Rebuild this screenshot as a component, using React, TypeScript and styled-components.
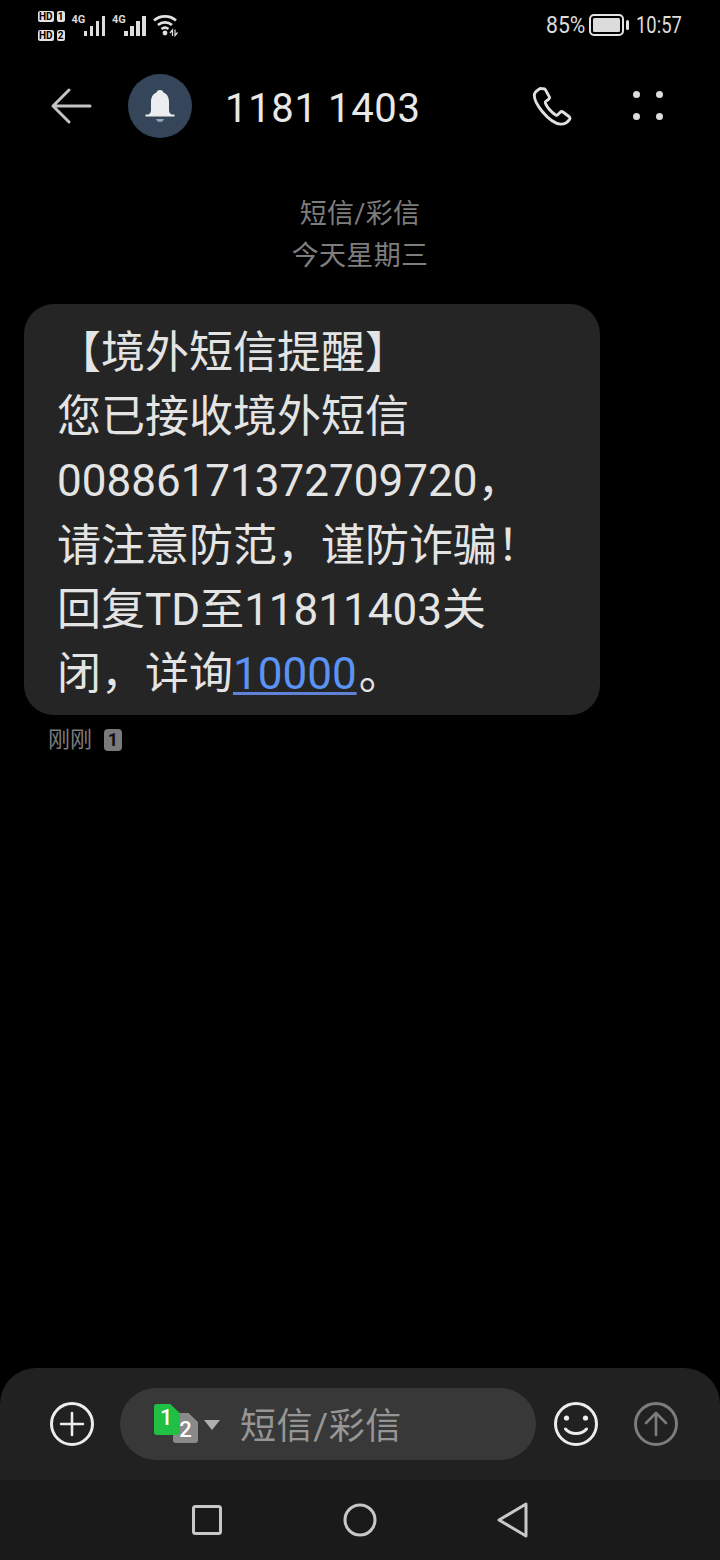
import React from 'react';
import styled, { createGlobalStyle } from 'styled-components';

const FONT = `Roboto, "Noto Sans CJK SC", sans-serif`;

const GlobalStyle = createGlobalStyle`
  html, body {
    margin: 0;
    padding: 0;
    background: #000;
  }
  body {
    font-family: ${FONT};
  }
`;

const Screen = styled.div`
  width: 720px;
  height: 1560px;
  display: flex;
  flex-direction: column;
  background: #000;
  color: #e6e6e6;
  overflow: hidden;
`;

// Status bar
const StatusBar = styled.div`
  height: 50px;
  flex: none;
  display: flex;
  align-items: center;
  justify-content: space-between;
  padding: 0 38px 0 38px;
`;

const StatusLeft = styled.div`
  display: flex;
  align-items: flex-start;
  gap: 7px;
`;

const StatusRight = styled.div`
  display: flex;
  align-items: center;
  font-size: 23px;
  color: #dcdcdc;
`;

const StatusText = styled.span<{ w: number; squeeze: number }>`
  display: block;
  width: ${({ w }) => w}px;
  white-space: nowrap;
  transform: scaleX(${({ squeeze }) => squeeze});
  transform-origin: left center;
`;

const SimStack = styled.div`
  display: flex;
  flex-direction: column;
  gap: 8px;
  padding-top: 1px;
`;

const SimRow = styled.div`
  display: flex;
  gap: 3px;
`;

const SimTag = styled.span`
  display: block;
  height: 11px;
  line-height: 11px;
  padding: 0 1px;
  min-width: 6px;
  text-align: center;
  background: #e2e2e2;
  border-radius: 2px;
  color: #000;
  font-size: 10px;
  font-weight: 700;
`;

const Signal = styled.div`
  display: flex;
  align-items: flex-end;
  height: 22px;
  margin-top: 4px;
`;

const NetLabel = styled.span`
  align-self: flex-start;
  width: 12px;
  margin-top: -1px;
  font-size: 11px;
  line-height: 13px;
  font-weight: 700;
  white-space: nowrap;
  color: #d8d8d8;
`;

const Bars = styled.div`
  display: flex;
  align-items: flex-end;
  gap: 2.5px;
`;

const Bar = styled.span<{ h: number }>`
  display: block;
  width: 3.5px;
  height: ${({ h }) => h}px;
  background: #dedede;
`;

const Battery = styled.div`
  display: flex;
  margin: 0 7px 0 5px;
`;

const WifiIcon = styled.svg`
  margin-top: 4px;
`;

// Header
const Header = styled.div`
  height: 112px;
  flex: none;
  display: flex;
  align-items: center;
  padding: 0 57px 0 50px;
`;

const BackButton = styled.div`
  width: 78px;
  display: flex;
  align-items: center;
`;

const Avatar = styled.div`
  width: 64px;
  height: 64px;
  flex: none;
  border-radius: 50%;
  background: #36465a;
  display: flex;
  align-items: center;
  justify-content: center;
`;

const Title = styled.div`
  flex: 1;
  margin-left: 33px;
  padding-top: 4px;
  font-size: 40px;
  font-weight: 400;
  color: #e8e8e8;
  letter-spacing: 0.65px;
`;

const HeaderActions = styled.div`
  display: flex;
  align-items: center;
  gap: 61px;
`;

const DotsIcon = styled.div`
  width: 30px;
  height: 29px;
  margin-top: -2px;
  display: grid;
  grid-template-columns: 7px 7px;
  justify-content: space-between;
  align-content: space-between;
`;

const Dot = styled.span`
  width: 7px;
  height: 7px;
  border-radius: 50%;
  background: #dcdcdc;
`;

// Conversation
const Thread = styled.div`
  flex: 1;
  padding: 32px 0 0 24px;
`;

const Meta = styled.div`
  margin-left: -24px;
  text-align: center;
  font-size: 27px;
  line-height: 41.5px;
  letter-spacing: 0.3px;
  color: #7e7e7e;
`;

const Bubble = styled.div`
  width: 576px;
  box-sizing: border-box;
  margin-top: 27px;
  padding: 17px 20px 9px 33px;
  background: #252525;
  border-radius: 30px;
  font-size: 44px;
  line-height: 64.2px;
  color: #e4e4e4;
`;

const Line = styled.div`
  white-space: nowrap;
`;

const PhoneLink = styled.span`
  margin-right: 2px;
  color: #5b93f5;
  text-decoration: underline;
  text-decoration-color: #5f82d8;
  text-decoration-thickness: 3px;
  text-underline-offset: 3px;
`;

const Receipt = styled.div`
  display: flex;
  align-items: center;
  gap: 12px;
  margin: 9px 0 0 24px;
  font-size: 22px;
  line-height: 32px;
  color: #7c7c7c;
`;

const ReceiptBadge = styled.span`
  width: 18px;
  height: 22px;
  border-radius: 4px;
  background: #7a7a7a;
  color: #111;
  font-size: 18px;
  font-weight: 700;
  line-height: 22px;
  text-align: center;
`;

// Composer
const Composer = styled.div`
  height: 112px;
  flex: none;
  box-sizing: border-box;
  padding: 20px 42px 20px 50px;
  display: flex;
  align-items: flex-start;
  background: #212121;
  border-radius: 36px 36px 0 0;
`;

const RoundIcon = styled.div<{ offset?: number }>`
  width: 44px;
  height: 44px;
  flex: none;
  margin-top: 14px;
  margin-left: ${({ offset = 0 }) => offset}px;
`;

const InputPill = styled.div`
  width: 416px;
  height: 72px;
  flex: none;
  margin-left: 26px;
  display: flex;
  align-items: center;
  background: #383838;
  border-radius: 36px;
`;

const SimPicker = styled.div`
  position: relative;
  width: 120px;
  height: 72px;
  flex: none;
`;

const SimCard = styled.span<{ active?: boolean }>`
  position: absolute;
  left: ${({ active }) => (active ? 34 : 53)}px;
  top: ${({ active }) => (active ? 16 : 25)}px;
  width: ${({ active }) => (active ? 26 : 25)}px;
  height: ${({ active }) => (active ? 31 : 30)}px;
  background: ${({ active }) => (active ? '#1fc043' : '#8a8a8a')};
  clip-path: polygon(0 0, 62% 0, 100% 30%, 100% 100%, 0 100%);
  border-radius: 3px;
  color: #fff;
  font-size: 22px;
  font-weight: 500;
  line-height: ${({ active }) => (active ? 28 : 34)}px;
  text-align: ${({ active }) => (active ? 'left' : 'center')};
  padding-left: ${({ active }) => (active ? 6 : 0)}px;
  box-sizing: border-box;
  z-index: ${({ active }) => (active ? 2 : 1)};
`;

const Caret = styled.span`
  position: absolute;
  left: 84px;
  top: 32px;
  width: 0;
  height: 0;
  border-left: 8px solid transparent;
  border-right: 8px solid transparent;
  border-top: 10px solid #b0b0b0;
`;

const Placeholder = styled.span`
  margin-top: -2px;
  font-size: 36px;
  letter-spacing: 0.6px;
  color: #969696;
`;

// Navigation bar
const NavBar = styled.div`
  height: 80px;
  flex: none;
  display: flex;
  align-items: center;
  justify-content: center;
  gap: 119px;
  background: #1a1a1a;
`;

const NavIcon = styled.svg<{ wide?: boolean }>`
  width: ${({ wide }) => (wide ? 36 : 32)}px;
  height: 36px;
  fill: none;
  stroke: #c8c8c8;
  stroke-width: 3;
  stroke-linejoin: round;
`;

const SignalBars = () => (
  <Bars>
    <Bar h={5} />
    <Bar h={10} />
    <Bar h={15} />
    <Bar h={20} />
  </Bars>
);

export default function App() {
  return (
    <Screen>
      <GlobalStyle />
      <StatusBar>
        <StatusLeft>
          <SimStack>
            <SimRow>
              <SimTag>HD</SimTag>
              <SimTag>1</SimTag>
            </SimRow>
            <SimRow>
              <SimTag>HD</SimTag>
              <SimTag>2</SimTag>
            </SimRow>
          </SimStack>
          <Signal>
            <NetLabel>4G</NetLabel>
            <SignalBars />
          </Signal>
          <Signal>
            <NetLabel>4G</NetLabel>
            <SignalBars />
          </Signal>
          <WifiIcon width="26" height="24" viewBox="0 0 26 24" fill="none" stroke="#e2e2e2" strokeWidth="2.6">
            <path d="M1 6.500C7 1 17 1 23 6.500" />
            <path d="M5 11C9 7.500 15 7.500 19 11" />
            <path d="M8.500 15C10.500 13.500 13.500 13.500 15.500 15" />
            <circle cx="12" cy="19" r="2.400" fill="#e2e2e2" stroke="none" />
            <path d="M19.500 22v-6l-2.500 3M22 15.500v6l2.500-3" strokeWidth="1.200" />
          </WifiIcon>
        </StatusLeft>
        <StatusRight>
          <StatusText w={38} squeeze={0.92}>85%</StatusText>
          <Battery>
            <svg width="40" height="22" viewBox="0 0 40 22">
              <rect x="1" y="1" width="33" height="20" rx="4" fill="none" stroke="#e4e4e4" strokeWidth="2" />
              <rect x="4" y="4" width="27" height="14" rx="1.500" fill="#dcdcdc" />
              <rect x="37" y="6" width="3" height="10" rx="1.500" fill="#e4e4e4" />
            </svg>
          </Battery>
          <StatusText w={46} squeeze={0.8}>10:57</StatusText>
        </StatusRight>
      </StatusBar>

      <Header>
        <BackButton>
          <svg width="42" height="38" viewBox="0 0 42 38" fill="none" stroke="#c4c4c4" strokeWidth="3" strokeLinecap="round" strokeLinejoin="round">
            <path d="M40 19H3M19 3L3 19l16 16" />
          </svg>
        </BackButton>
        <Avatar>
          <svg width="32" height="34" viewBox="0 0 32 34">
            <path d="M16 1c2 0 3 1 3.500 2.500C23.500 5 25 9 25 13v8c0 2 1 3.500 2.500 4.500H30.500V27.500H1.500V25.500H4.500C6 24.500 7 23 7 21v-8c0-4 1.500-8 5.500-9.500C13 2 14 1 16 1z" fill="#ecedf0" />
            <path d="M12 30h8c-.5 2-2 3-4 3s-3.500-1-4-3z" fill="#9ba3ad" />
          </svg>
        </Avatar>
        <Title>1181 1403</Title>
        <HeaderActions>
          <svg width="40" height="40" viewBox="0 0 42 42" fill="none" stroke="#e0e0e0" strokeWidth="3" strokeLinejoin="round">
            <path d="M9 2.500c-3 1.500-6 3.500-6.500 6.500C2 14 6 21 11 27c5 6 12 12.500 19 13 3 .2 7-1.500 9.500-5 .6-1 .4-2-.4-2.700l-6.600-5c-1-.7-2-.6-2.800.2l-2.700 2.700c-.6.6-1.400.6-2.100.2-2.500-1.500-4.700-3.500-6.600-5.700-1.800-2-3.200-4.200-4.200-6.500-.3-.8-.1-1.500.5-2l3-2.300c.8-.7 1-1.700.5-2.700l-4-7.300c-.6-1-1.600-1.300-2.600-.9z" />
          </svg>
          <DotsIcon>
            <Dot />
            <Dot />
            <Dot />
            <Dot />
          </DotsIcon>
        </HeaderActions>
      </Header>

      <Thread>
        <Meta>
          短信/彩信
          <br />
          今天星期三
        </Meta>
        <Bubble>
          <Line>【境外短信提醒】</Line>
          <Line>您已接收境外短信</Line>
          <Line>00886171372709720，</Line>
          <Line>请注意防范，谨防诈骗！</Line>
          <Line>回复TD至11811403关</Line>
          <Line>
            闭，详询<PhoneLink>10000</PhoneLink>。
          </Line>
        </Bubble>
        <Receipt>
          刚刚
          <ReceiptBadge>1</ReceiptBadge>
        </Receipt>
      </Thread>

      <Composer>
        <RoundIcon>
          <svg width="44" height="44" viewBox="0 0 44 44" fill="none" stroke="#ececec" strokeWidth="3" strokeLinecap="round">
            <circle cx="22" cy="22" r="20.500" />
            <path d="M22 11v22M11 22h22" strokeWidth="2.600" />
          </svg>
        </RoundIcon>
        <InputPill>
          <SimPicker>
            <SimCard active>1</SimCard>
            <SimCard>2</SimCard>
            <Caret />
          </SimPicker>
          <Placeholder>短信/彩信</Placeholder>
        </InputPill>
        <RoundIcon offset={18}>
          <svg width="44" height="44" viewBox="0 0 44 44" fill="none" stroke="#ececec" strokeWidth="3" strokeLinecap="round">
            <circle cx="22" cy="22" r="20.500" />
            <circle cx="12.500" cy="16" r="2.600" fill="#ececec" stroke="none" />
            <circle cx="31.500" cy="16" r="2.600" fill="#ececec" stroke="none" />
            <path d="M11.500 27c5 6 16 6 21 0" />
          </svg>
        </RoundIcon>
        <RoundIcon offset={36}>
          <svg width="44" height="44" viewBox="0 0 44 44" fill="none" stroke="#7c7c7c" strokeWidth="3" strokeLinecap="round" strokeLinejoin="round">
            <circle cx="22" cy="22" r="20.500" />
            <path d="M22 33V11M12 21l10-10 10 10" strokeWidth="2.600" />
          </svg>
        </RoundIcon>
      </Composer>

      <NavBar>
        <NavIcon viewBox="0 0 32 36">
          <rect x="2.500" y="4.500" width="27" height="27" rx="2" />
        </NavIcon>
        <NavIcon wide viewBox="0 0 36 36">
          <circle cx="18" cy="18" r="15" />
        </NavIcon>
        <NavIcon viewBox="0 0 32 36">
          <path d="M2 18L29 2v32z" />
        </NavIcon>
      </NavBar>
    </Screen>
  );
}
